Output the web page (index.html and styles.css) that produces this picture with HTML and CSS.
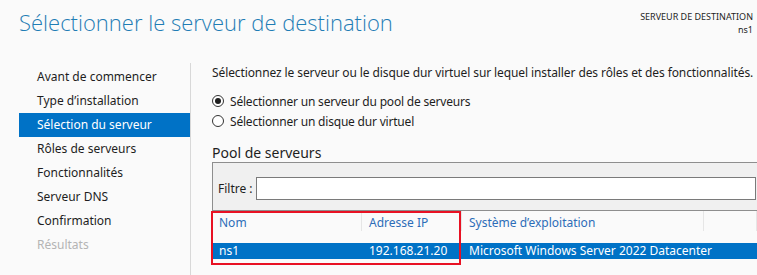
FILE: index.html
```html
<!DOCTYPE html>
<html lang="fr">
<head>
  <meta charset="UTF-8">
  <title>Assistant Ajout de rôles et de fonctionnalités</title>
  <link rel="stylesheet" href="styles.css">
</head>
<body>

<!-- En-tete -->
<div class="header">
  <h1 class="title">Sélectionner le serveur de destination</h1>
  <div class="dest">
    <div>SERVEUR DE DESTINATION</div>
    <div>ns1</div>
  </div>
</div>

<div class="main">
  <!-- Etapes -->
  <ul class="steps">
    <li>Avant de commencer</li>
    <li>Type d’installation</li>
    <li class="active">Sélection du serveur</li>
    <li>Rôles de serveurs</li>
    <li>Fonctionnalités</li>
    <li>Serveur DNS</li>
    <li>Confirmation</li>
    <li class="disabled">Résultats</li>
  </ul>

  <div class="content">
    <p class="intro">Sélectionnez le serveur ou le disque dur virtuel sur lequel installer des rôles et des fonctionnalités.</p>

    <label class="radio"><span class="dot checked"></span>Sélectionner un serveur du pool de serveurs</label>
    <label class="radio"><span class="dot"></span>Sélectionner un disque dur virtuel</label>

    <h3 class="pool-title">Pool de serveurs</h3>
    <div class="pool">
      <div class="filter">
        <span>Filtre :</span>
        <div class="filter-input"></div>
      </div>
    </div>

    <div class="grid">
      <div class="grid-head">
        <div class="col c1">Nom</div>
        <div class="col c2">Adresse IP</div>
        <div class="col c3">Système d’exploitation</div>
        <div class="col c4"></div>
      </div>
      <div class="grid-row selected">
        <div class="col c1">ns1</div>
        <div class="col c2">192.168.21.20</div>
        <div class="col c3">Microsoft Windows Server 2022 Datacenter</div>
        <div class="col c4"></div>
      </div>
      <div class="highlight"></div>
    </div>
  </div>
</div>

</body>
</html>
```

FILE: styles.css
```css
html, body {
  overflow: hidden;
}
body {
  font-family: "Noto Sans", "Open Sans", sans-serif;
  font-size: 12px;
  color: #1e1e1e;
  background: #fafafa;
  margin: 0;
  width: 757px;
  height: 275px;
}
.header {
  display: flex;
  justify-content: space-between;
  height: 63px;
}
.title {
  margin: 7px 0 0 19px;
  font-family: "Open Sans", sans-serif;
  font-weight: 300;
  font-size: 22px;
  color: #1f7db5;
}
.dest {
  margin: 10px 4px 0 0;
  text-align: right;
  font-size: 9px;
  line-height: 13px;
}
.main {
  display: flex;
}
.steps {
  list-style: none;
  margin: 0 0 0 19px;
  padding: 2px 0 0;
  width: 172px;
  flex-shrink: 0;
  box-sizing: border-box;
  border-right: 1px solid #d8d8d8;
  height: 212px;
}
.steps li {
  height: 24px;
  line-height: 24px;
  padding-left: 18px;
}
.steps li.active {
  background: #0072c6;
  color: #fff;
}
.steps li.disabled {
  color: #b4b4b4;
}
.content {
  flex: 1;
  min-width: 0;
  padding-left: 21px;
}
.intro {
  margin: 2px 0 10px 0;
  line-height: 16px;
  letter-spacing: -0.1px;
  white-space: nowrap;
}
.radio {
  display: flex;
  align-items: center;
  height: 20px;
  letter-spacing: -0.2px;
}
.dot {
  width: 12px;
  height: 12px;
  border: 1px solid #333;
  border-radius: 50%;
  margin-right: 6px;
  box-sizing: border-box;
  position: relative;
  background: #fff;
}
.dot.checked::after {
  content: "";
  position: absolute;
  left: 2px;
  top: 2px;
  width: 6px;
  height: 6px;
  border-radius: 50%;
  background: #1e1e1e;
}
.pool-title {
  margin: 13px 0 0 0;
  font-weight: normal;
  font-size: 14px;
  line-height: 18px;
}
.pool {
  height: 47px;
  border: 1px solid #8e8e8e;
  border-right: none;
  background: #f0f0f0;
}
.filter {
  display: flex;
  align-items: center;
  padding: 14px 1px 0 5px;
}
.filter span {
  width: 38px;
}
.filter-input {
  height: 21px;
  flex: 1;
  border: 1px solid #7a7a7a;
  background: #fff;
}
.grid {
  position: relative;
}
.grid-head, .grid-row {
  display: flex;
}
.grid-head {
  height: 26px;
  color: #2d6db8;
  margin-bottom: 6px;
}
.grid-head .col {
  border-right: 1px solid #e6e6e6;
  height: 20px;
  line-height: 24px;
}
.grid-row {
  height: 16px;
  line-height: 16px;
}
.grid-row.selected {
  background: #0072c6;
  color: #fff;
}
.col {
  padding-left: 7px;
  box-sizing: border-box;
  white-space: nowrap;
}
.c1 { width: 150px; }
.c2 { width: 100px; }
.c3 { width: 242px; }
.c4 { flex: 1; min-width: 0; }
.highlight {
  position: absolute;
  left: -1px;
  top: 0;
  width: 250px;
  height: 54px;
  border: 2px solid #e81123;
  box-sizing: border-box;
}
```
